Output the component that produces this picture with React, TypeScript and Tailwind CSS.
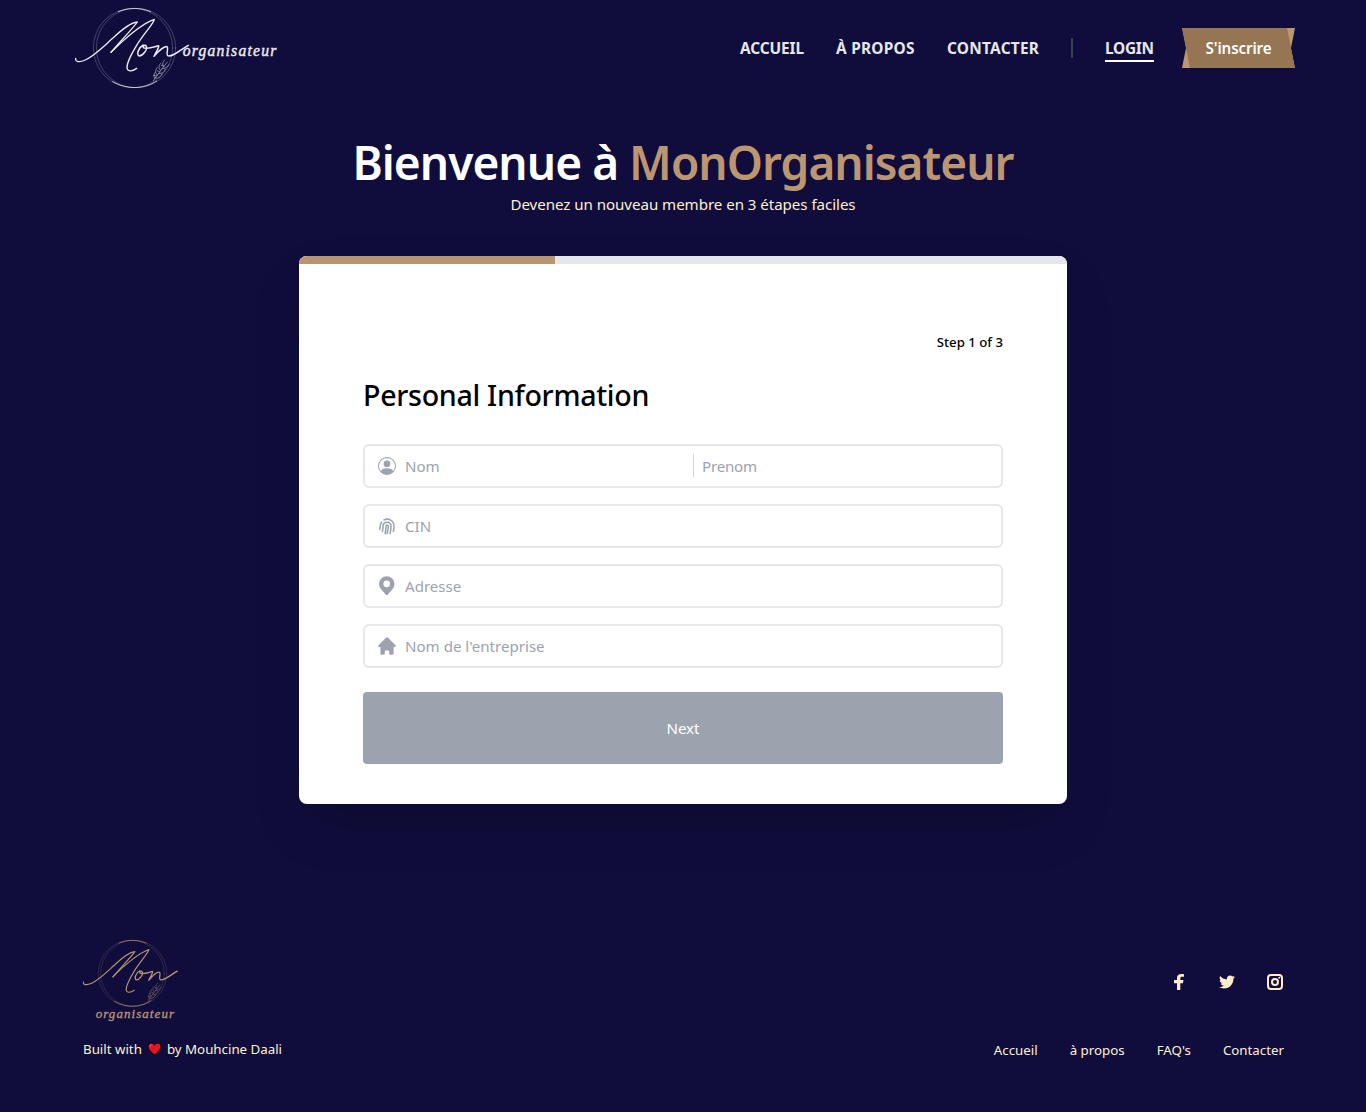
import React, { type ReactNode } from "react";
import { BsPersonCircle } from "react-icons/bs";
import { HiHome } from "react-icons/hi";
import { FaTwitter } from "react-icons/fa";

function LogoMark() {
  return (
    <g fill="none" stroke="currentColor" strokeLinecap="round" strokeLinejoin="round">
      <circle cx="189" cy="144" r="119" strokeWidth="2" opacity="0.35" />
      <circle cx="198" cy="144" r="119" strokeWidth="2" opacity="0.35" />
      <path d="M145 35C175 22 212 22 242 35M128 245C170 269 220 269 260 243" strokeWidth="3" opacity="0.75" />
      <path
        d="M17 175C15 187 30 187 46 180C72 168 102 138 128 115C152 92 180 68 202 66C190 84 150 124 123 157"
        strokeWidth="4"
      />
      <path
        d="M123 157C160 118 220 68 253 58C250 72 222 100 200 136C184 162 170 190 171 204C173 216 187 214 200 205"
        strokeWidth="4"
      />
      <path
        d="M220 135C207 142 198 162 207 168C219 168 233 148 229 139C226 133 218 137 220 143C230 149 248 142 266 137C268 142 258 156 252 169C265 154 284 137 291 140C297 145 287 160 293 167C306 173 330 150 355 136"
        strokeWidth="4.5"
      />
      <g strokeWidth="2.5" opacity="0.6">
        <path d="M250 242C262 224 275 208 292 186M254 236C250 228 252 222 256 216M262 226C254 218 256 210 262 202M272 212C264 204 266 196 272 190M280 200C276 192 278 186 284 180" />
        <path d="M256 234C266 236 272 230 276 222M266 221C276 222 284 216 286 208M276 206C286 206 292 202 297 194M250 226L260 228M262 212L270 216M274 196L282 198" />
      </g>
    </g>
  );
}

function HeaderLogo() {
  return (
    <svg viewBox="15 24 609 240" className="h-20 w-[203px] overflow-visible text-[#ececf2]">
      <LogoMark />
      <text
        x="338"
        y="167"
        textLength="281"
        fill="currentColor"
        stroke="currentColor"
        strokeWidth="1.2"
        className="font-['Liberation_Serif'] text-[47px] italic"
      >
        organisateur
      </text>
    </svg>
  );
}

function FooterLogo() {
  return (
    <svg viewBox="39 30 288 240" className="h-20 w-24 overflow-visible text-[#b99470]">
      <g transform="translate(26.2 10) scale(0.833)">
        <LogoMark />
      </g>
      <text
        x="77"
        y="263"
        textLength="235"
        fill="currentColor"
        stroke="currentColor"
        strokeWidth="1"
        className="font-['Liberation_Serif'] text-[39px] italic"
      >
        organisateur
      </text>
    </svg>
  );
}

function FingerprintIcon() {
  return (
    <svg
      viewBox="0 0 48 50"
      className="h-[17px] w-4"
      fill="none"
      stroke="currentColor"
      strokeWidth="4.6"
      strokeLinecap="round"
    >
      <path d="M15 5C29 -1 45 7 45 23C45 30 45 35 43 40" />
      <path d="M8 12C4 17 3 22 3 27L2 34" />
      <path d="M10 40C12 34 12 30 12 25C12 8 36 8 36 25C36 33 35 40 33 46" />
      <path d="M18 46C21 38 21 32 21 25C21 19 28 19 28 25C28 33 27 39 24 47" />
    </svg>
  );
}

function PinIcon() {
  return (
    <svg viewBox="3 1 18 22.8" className="h-5 w-[15.5px]" fill="currentColor">
      <path
        fillRule="evenodd"
        d="M18.364 16.364L13 22.6Q12 23.6 11 22.6L5.636 16.364A9 9 0 1 1 18.364 16.364ZM12 13.8A3.9 3.9 0 1 0 12 6A3.9 3.9 0 0 0 12 13.8Z"
      />
    </svg>
  );
}

function FacebookIcon() {
  return (
    <svg viewBox="-3 0 16 16" className="size-4" fill="currentColor">
      <path d="M6.3 16V9.2H9L9.4 6H6.3V4.4C6.3 3.3 6.7 2.8 7.8 2.8H10V0.2C9.5 0.1 8.6 0 7.4 0C4.7 0 3 1.5 3 4.1V6H0V9.2H3V16Z" />
    </svg>
  );
}

function InstagramIcon() {
  return (
    <svg viewBox="0 0 16 16" className="size-4" fill="none" stroke="currentColor">
      <rect x="1" y="1" width="14" height="14" rx="3" strokeWidth="2" />
      <circle cx="8" cy="8" r="3" strokeWidth="2" />
      <circle cx="12.2" cy="3.8" r="1" fill="currentColor" stroke="none" />
    </svg>
  );
}

function HeartIcon() {
  return (
    <svg viewBox="0 0 16 15" className="h-[14px] w-[15px]">
      <path
        d="M8 14.2C5 11.6 1 8.6 1 5C1 2.6 2.7 1 4.7 1C6.2 1 7.4 1.8 8 3C8.6 1.8 9.8 1 11.3 1C13.3 1 15 2.6 15 5C15 8.6 11 11.6 8 14.2Z"
        fill="#e81224"
        stroke="#14060c"
        strokeWidth="1.2"
      />
      <path d="M3 5.2C3 3.8 3.8 3 5 2.9" fill="none" stroke="#f4616d" strokeWidth="1" />
    </svg>
  );
}

function Field({ icon, children }: { icon: ReactNode; children: ReactNode }) {
  return (
    <div className="flex h-11 items-center rounded-md border-2 border-gray-200 text-[#9ca3af]">
      <span className="ml-3 flex w-5 shrink-0 items-center justify-center">{icon}</span>
      {children}
    </div>
  );
}

const inputClass = "min-w-0 pl-2 text-[15.1px] leading-6 outline-none placeholder:text-[#9ca3af]";

export default function App() {
  return (
    <div className="flex h-[1112px] flex-col overflow-hidden bg-[#100d3d] font-['Noto_Sans',sans-serif]">
      <header className="flex h-24 items-center justify-between pr-[71px] pl-[75px]">
        <HeaderLogo />
        <nav className="flex items-center whitespace-nowrap text-[15.4px] leading-6 font-bold text-gray-200">
          <a className="w-16 pt-px tracking-[-0.1px]">ACCUEIL</a>
          <a className="ml-8 w-[79px] pt-px tracking-[0.25px]">À PROPOS</a>
          <a className="ml-8 w-[92px] pt-px tracking-[0.25px]">CONTACTER</a>
          <span className="ml-8 h-5 w-0.5 bg-[#374151]" />
          <a className="ml-8 h-7 w-[49px] border-b-2 border-white pt-[3px] tracking-[-0.25px]">LOGIN</a>
          <a className="ml-7 h-10 w-[113px] bg-[#bb9671] [clip-path:polygon(0_0,100%_0,109px_50%,100%_100%,0_100%,4px_50%)]">
            <span className="flex h-full items-center justify-center bg-[#967552] text-[15.2px] font-semibold tracking-[-0.15px] text-white [clip-path:polygon(0_0,105px_0,113px_100%,8px_100%)]">
              S'inscrire
            </span>
          </a>
        </nav>
      </header>

      <main className="flex flex-col items-center">
        <h1 className="mt-[38px] text-[46px] leading-[56px] font-semibold tracking-[-0.95px] text-white">
          Bienvenue à <span className="text-[#bb9671]">MonOrganisateur</span>
        </h1>
        <p className="mt-0.5 text-[15.1px] leading-6 tracking-[-0.04px] text-[#fff0cf]">
          Devenez un nouveau membre en 3 étapes faciles
        </p>

        <section className="mt-10 h-[548px] w-3xl overflow-hidden rounded-lg bg-white shadow-2xl">
          <div className="h-2 bg-gray-200">
            <div className="h-full w-1/3 bg-[#b99470]" />
          </div>
          <form className="flex flex-col px-16">
            <p className="mt-[68px] text-right text-[13.2px] leading-5 font-medium text-black">Step 1 of 3</p>
            <h2 className="mt-[25px] text-[28.6px] leading-9 font-medium tracking-[-0.3px] text-black">
              Personal Information
            </h2>
            <div className="mt-[31px] flex flex-col gap-4">
              <Field icon={<BsPersonCircle className="mr-px size-[18px]" />}>
                <input className={`${inputClass} w-[296px]`} placeholder="Nom" />
                <span className="h-6 w-px bg-gray-300" />
                <input className={`${inputClass} flex-1 tracking-[-0.2px]`} placeholder="Prenom" />
              </Field>
              <Field icon={<FingerprintIcon />}>
                <input className={`${inputClass} flex-1`} placeholder="CIN" />
              </Field>
              <Field icon={<PinIcon />}>
                <input className={`${inputClass} flex-1`} placeholder="Adresse" />
              </Field>
              <Field icon={<HiHome className="size-[22px] shrink-0" />}>
                <input className={`${inputClass} flex-1`} placeholder="Nom de l'entreprise" />
              </Field>
            </div>
            <button type="button" className="mt-6 h-[72px] rounded bg-[#9ca3af] text-[15.1px] text-white">
              Next
            </button>
          </form>
        </section>
      </main>

      <footer className="mt-[136px] flex justify-between pr-[82px] pl-[83px] text-[13.3px] leading-5 text-[#fff0cf]">
        <div>
          <FooterLogo />
          <p className="mt-[19px] flex items-center whitespace-nowrap">
            Built with
            <span className="mx-[5px]">
              <HeartIcon />
            </span>
            by Mouhcine Daali
          </p>
        </div>
        <div className="flex flex-col items-end">
          <div className="mt-[34px] mr-px flex gap-8 text-[#ffecc8]">
            <FacebookIcon />
            <FaTwitter className="size-4" />
            <InstagramIcon />
          </div>
          <div className="mt-[50px] flex gap-8 whitespace-nowrap">
            <a>Accueil</a>
            <a>à propos</a>
            <a>FAQ's</a>
            <a>Contacter</a>
          </div>
        </div>
      </footer>
    </div>
  );
}
